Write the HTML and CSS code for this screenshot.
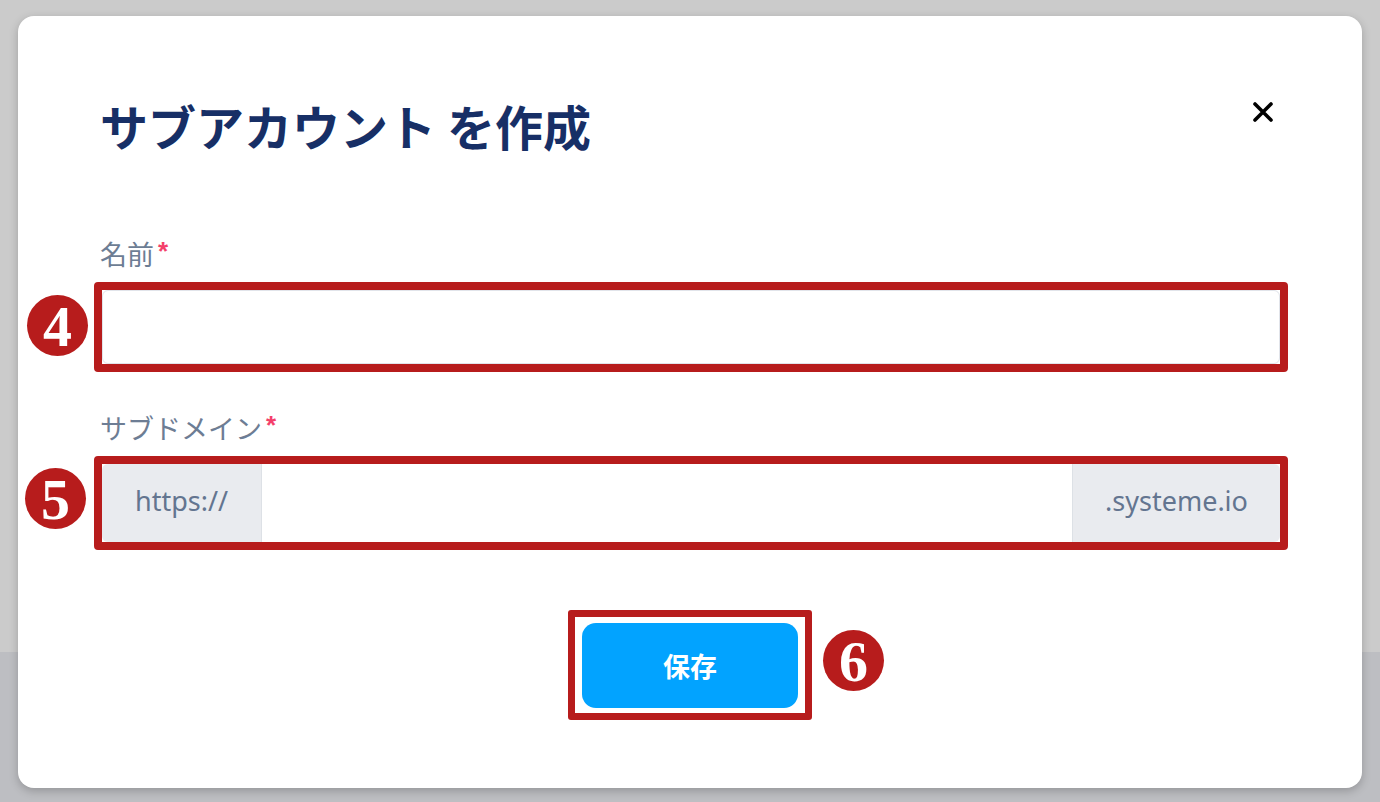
FILE: index.html
```html
<!DOCTYPE html>
<html lang="ja">
<head>
<meta charset="utf-8">
<title>サブアカウント を作成</title>
<link rel="stylesheet" href="styles.css">
</head>
<body>
<div class="backdrop">
  <div class="backdrop-top"></div>
  <div class="backdrop-bottom"></div>
</div>
<div class="modal">
  <div class="modal-header">
    <h1 class="modal-title">サブアカウント を作成</h1>
    <button class="close" aria-label="close">
      <svg width="20" height="20" viewBox="0 0 20 20"><path d="M2 2 L18 18 M18 2 L2 18" stroke="#000" stroke-width="3.6" stroke-linecap="round"/></svg>
    </button>
  </div>
  <div class="field field-name">
    <label class="label">名前<span class="req">*</span></label>
    <div class="highlight">
      <span class="badge badge-left">4</span>
      <input class="text-input" type="text">
    </div>
  </div>
  <div class="field field-sub">
    <label class="label">サブドメイン<span class="req">*</span></label>
    <div class="highlight">
      <span class="badge badge-left">5</span>
      <div class="group">
        <span class="addon addon-left">https://</span>
        <input class="group-input" type="text">
        <span class="addon addon-right">.systeme.io</span>
      </div>
    </div>
  </div>
  <div class="actions">
    <div class="btn-highlight">
      <button class="save">保存</button>
      <span class="badge badge-right">6</span>
    </div>
  </div>
</div>
</body>
</html>
```
FILE: styles.css
```css
* { box-sizing: border-box; }
html, body { margin: 0; padding: 0; }
body {
  width: 1380px;
  height: 802px;
  overflow: hidden;
  position: relative;
  font-family: "Noto Sans CJK JP", sans-serif;
}
.backdrop { display: flex; flex-direction: column; height: 802px; }
.backdrop-top { height: 652px; background: #cbcbcb; }
.backdrop-bottom { flex: 1; background: #bdbec2; }

.modal {
  position: absolute;
  left: 18px;
  top: 16px;
  width: 1344px;
  height: 772px;
  background: #fff;
  border-radius: 16px;
  box-shadow: 0 3px 10px rgba(0,0,0,0.22);
  padding: 0 82px;
}
.modal-header {
  display: flex;
  justify-content: space-between;
  align-items: flex-start;
  padding-top: 79px;
  height: 178px;
}
.modal-title {
  margin: 0;
  font-size: 48px;
  line-height: 60px;
  font-weight: 700;
  color: #172f66;
}
.close {
  border: 0;
  background: none;
  padding: 0;
  margin: 7px 7px 0 0;
  width: 20px;
  height: 20px;
  display: block;
  cursor: pointer;
}
.close svg { display: block; }

.field { display: flex; flex-direction: column; }
.field-name { padding-top: 42px; }
.field-sub { padding-top: 38px; }
.label {
  font-size: 27px;
  line-height: 36px;
  color: #6d7d94;
  margin-bottom: 10px;
}
.req {
  color: #f43f6b;
  margin-left: 4px;
  font-family: "Liberation Sans", sans-serif;
  font-weight: 700;
  font-size: 26px;
  vertical-align: top;
  position: relative;
  top: -3px;
}

.highlight {
  position: relative;
  margin: 0 -8px 0 -6px;
  border: 8px solid #b71c1c;
  border-radius: 4px;
}
.text-input {
  display: block;
  width: 100%;
  height: 74px;
  border: 1px solid #e1e4ea;
  border-radius: 6px;
  outline: none;
  background: #fff;
  font-size: 24px;
}
.group {
  display: flex;
  height: 78px;
}
.addon {
  display: flex;
  align-items: center;
  justify-content: center;
  background: #e9ebef;
  color: #637590;
  font-family: "Noto Sans", sans-serif;
  font-size: 27px;
  padding: 0 20px 5px;
}
.addon-left { width: 160px; border-right: 1px solid #dde1e6; border-radius: 6px 0 0 6px; }
.addon-right { width: 208px; border-left: 1px solid #dde1e6; border-radius: 0 6px 6px 0; }
.group-input {
  flex: 1;
  min-width: 0;
  border: 0;
  outline: none;
  background: #fff;
}

.badge {
  position: absolute;
  width: 61px;
  height: 61px;
  border-radius: 50%;
  background: #b71c1c;
  color: #fff;
  font-family: "Liberation Serif", serif;
  font-weight: 700;
  font-size: 58px;
  line-height: 63px;
  text-align: center;
}
.badge-left { right: calc(100% + 14px); top: 50%; margin-top: -32px; }
.field-sub .badge-left { margin-top: -35px; right: calc(100% + 16px); }

.actions {
  display: flex;
  justify-content: center;
  padding-top: 60px;
}
.btn-highlight {
  position: relative;
  border: 7px solid #b71c1c;
  border-radius: 3px;
  padding: 6px 7px 5px 7px;
}
.save {
  display: block;
  width: 216px;
  height: 85px;
  border: 0;
  border-radius: 14px;
  background: #02a3ff;
  color: #fff;
  font-family: "Noto Sans CJK JP", sans-serif;
  font-size: 27px;
  font-weight: 700;
}
.badge-right { left: calc(100% + 18px); top: 50%; margin-top: -35px; }
```
